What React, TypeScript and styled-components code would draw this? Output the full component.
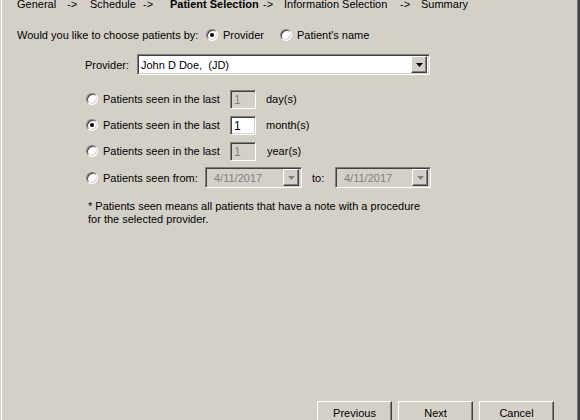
import React from "react";
import styled, { createGlobalStyle, css } from "styled-components";

const Global = createGlobalStyle`
  html, body { margin: 0; padding: 0; background: #d4d0c8; overflow: hidden; }
  body { font-family: "Liberation Sans", Arial, sans-serif; font-size: 11px; color: #000; }
`;

const Frame = styled.div`
  box-sizing: border-box;
  width: 580px;
  height: 420px;
  overflow: hidden;
  background: #d4d0c8;
  border-left: 1px solid #d4d0c8;
  border-right: 2px solid #404040;
  box-shadow: inset 1px 0 0 #ffffff, inset -1px 0 0 #808080;
  display: flex;
  flex-direction: column;
  padding-left: 16px;
`;

const Nav = styled.div`
  display: flex;
  align-items: center;
  height: 14px;
  margin-top: -3px;
  white-space: nowrap;
`;

const Step = styled.span<{ $w: number; $bold?: boolean }>`
  width: ${(p) => p.$w}px;
  flex: none;
  font-weight: ${(p) => (p.$bold ? "bold" : "normal")};
`;

const Row = styled.div<{ $indent?: number; $mt?: number; $h?: number }>`
  display: flex;
  align-items: center;
  margin-left: ${(p) => p.$indent ?? 0}px;
  margin-top: ${(p) => p.$mt ?? 0}px;
  height: ${(p) => p.$h ?? 18}px;
  white-space: nowrap;
`;

const Label = styled.span<{ $w?: number; $ml?: number; $gray?: boolean }>`
  ${(p) => (p.$w ? `width: ${p.$w}px; flex: none;` : "")}
  margin-left: ${(p) => p.$ml ?? 0}px;
  color: ${(p) => (p.$gray ? "#808080" : "#000")};
`;

const sunken = css`
  box-sizing: border-box;
  border: 1px solid;
  border-color: #808080 #ffffff #ffffff #808080;
  box-shadow: inset 1px 1px 0 #404040, inset -1px -1px 0 #d4d0c8;
`;

const raised = css`
  box-sizing: border-box;
  border: 1px solid;
  border-color: #ffffff #404040 #404040 #ffffff;
  box-shadow: inset -1px -1px 0 #808080, inset 1px 1px 0 #d4d0c8;
  background: #d4d0c8;
`;

const RadioMark = styled.span<{ $checked?: boolean }>`
  box-sizing: border-box;
  width: 12px;
  height: 12px;
  flex: none;
  border-radius: 50%;
  border: 1px solid;
  border-color: #808080 #ffffff #ffffff #808080;
  box-shadow: inset 1px 1px 0 #404040, inset -1px -1px 0 #d4d0c8;
  background: #ffffff;
  position: relative;
  &::after {
    content: "";
    display: ${(p) => (p.$checked ? "block" : "none")};
    position: absolute;
    left: 3px;
    top: 3px;
    width: 4px;
    height: 4px;
    border-radius: 50%;
    background: #000;
  }
`;

const RadioWrap = styled.label<{ $ml?: number }>`
  display: flex;
  align-items: center;
  gap: 5px;
  margin-left: ${(p) => p.$ml ?? 0}px;
`;

const Radio = ({ checked, label, ml }: { checked?: boolean; label: string; ml?: number }) => (
  <RadioWrap $ml={ml}>
    <RadioMark $checked={checked} />
    <span>{label}</span>
  </RadioWrap>
);

const Combo = styled.div<{ $w: number; $disabled?: boolean }>`
  ${sunken};
  width: ${(p) => p.$w}px;
  height: 21px;
  display: flex;
  align-items: center;
  padding: 2px;
  background: ${(p) => (p.$disabled ? "#d4d0c8" : "#ffffff")};
  color: ${(p) => (p.$disabled ? "#808080" : "#000")};
`;

const ComboText = styled.span<{ $pl: number }>`
  flex: 1;
  padding-left: ${(p) => p.$pl}px;
  overflow: hidden;
`;

const DropBtn = styled.span`
  ${raised};
  width: 16px;
  height: 17px;
  flex: none;
  display: flex;
  align-items: center;
  justify-content: center;
`;

const Arrow = ({ color }: { color: string }) => (
  <svg width="7" height="4" viewBox="0 0 7 4">
    <path d="M0 0h7L3.5 4z" fill={color} />
  </svg>
);

const Field = styled.span<{ $disabled?: boolean }>`
  ${sunken};
  width: 26px;
  height: 19px;
  flex: none;
  padding: 2px 3px;
  line-height: 14px;
  font-size: 12px;
  background: ${(p) => (p.$disabled ? "#d4d0c8" : "#ffffff")};
  color: ${(p) => (p.$disabled ? "#808080" : "#000")};
`;

const Note = styled.p`
  margin: 13px 0 0 71px;
  width: 340px;
  line-height: 13px;
`;

const Footer = styled.div`
  margin-top: auto;
  margin-bottom: -4px;
  display: flex;
  justify-content: flex-end;
  gap: 6px;
  padding-right: 24px;
`;

const Button = styled.button`
  ${raised};
  width: 75px;
  height: 23px;
  font: inherit;
  font-size: 11px;
  color: #000;
  padding: 0;
`;

const rows = [
  { label: "Patients seen in the last", unit: "day(s)", checked: false, unitMl: 10 },
  { label: "Patients seen in the last", unit: "month(s)", checked: true, unitMl: 10 },
  { label: "Patients seen in the last", unit: "year(s)", checked: false, unitMl: 11 },
];

export default function App() {
  return (
    <>
      <Global />
      <Frame>
        <Nav>
          <Step $w={50}>General</Step>
          <Step $w={23}>-&gt;</Step>
          <Step $w={53}>Schedule</Step>
          <Step $w={27}>-&gt;</Step>
          <Step $w={93} $bold>Patient Selection</Step>
          <Step $w={21}>-&gt;</Step>
          <Step $w={116}>Information Selection</Step>
          <Step $w={21}>-&gt;</Step>
          <Step $w={50}>Summary</Step>
        </Nav>
        <Row $mt={17} $h={14}>
          <Label $w={189}>Would you like to choose patients by:</Label>
          <Radio checked label="Provider" />
          <Radio label="Patient's name" ml={16} />
        </Row>
        <Row $indent={68} $mt={12} $h={21}>
          <Label $w={52}>Provider:</Label>
          <Combo $w={293}>
            <ComboText $pl={1}>John D Doe,&nbsp; (JD)</ComboText>
            <DropBtn>
              <Arrow color="#000" />
            </DropBtn>
          </Combo>
        </Row>
        <div>
          {rows.map((r, i) => (
            <Row key={i} $indent={69} $mt={i === 0 ? 15 : 8} $h={18}>
              <Label $w={144}>
                <Radio checked={r.checked} label={r.label} />
              </Label>
              <Field $disabled={!r.checked}>1</Field>
              <Label $ml={r.unitMl}>{r.unit}</Label>
            </Row>
          ))}
          <Row $indent={69} $mt={8} $h={19}>
            <Label $w={119}>
              <Radio label="Patients seen from:" />
            </Label>
            <Combo $w={97} $disabled>
              <ComboText $pl={6}>4/11/2017</ComboText>
              <DropBtn>
                <Arrow color="#808080" />
              </DropBtn>
            </Combo>
            <Label $w={23} $ml={10}>to:</Label>
            <Combo $w={96} $disabled>
              <ComboText $pl={6}>4/11/2017</ComboText>
              <DropBtn>
                <Arrow color="#808080" />
              </DropBtn>
            </Combo>
          </Row>
        </div>
        <Note>
          * Patients seen means all patients that have a note with a procedure for the selected provider.
        </Note>
        <Footer>
          <Button>Previous</Button>
          <Button>Next</Button>
          <Button>Cancel</Button>
        </Footer>
      </Frame>
    </>
  );
}
